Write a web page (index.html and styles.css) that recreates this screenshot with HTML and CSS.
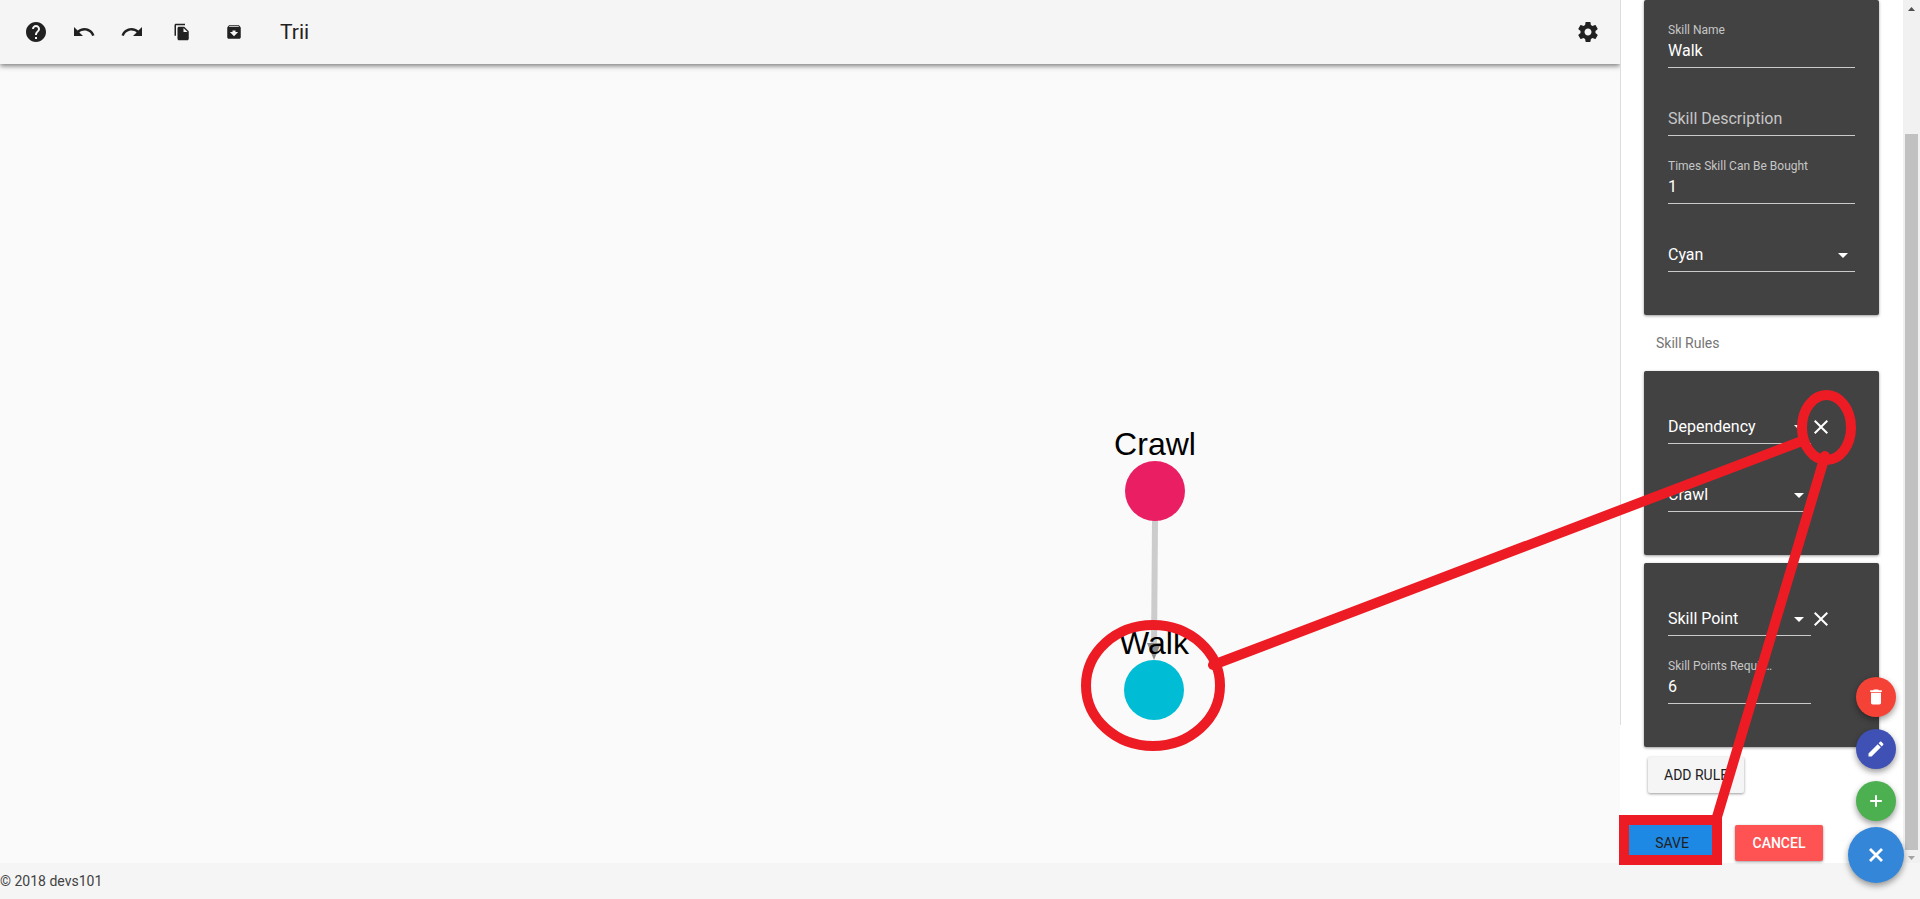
FILE: index.html
```html
<!DOCTYPE html>
<html lang="en">
<head>
<meta charset="utf-8">
<title>Trii</title>
<link rel="stylesheet" href="styles.css">
</head>
<body>
<div class="app">
  <div class="main">
    <div class="workspace">
      <header class="toolbar">
        <button class="tool" aria-label="Help"><svg class="icon" viewBox="0 0 24 24"><path d="M12 2C6.480 2 2 6.480 2 12s4.480 10 10 10 10-4.480 10-10S17.520 2 12 2zm1 17h-2v-2h2v2zm2.070-7.750l-.9.920C13.450 12.900 13 13.500 13 15h-2v-.5c0-1.100.45-2.100 1.170-2.830l1.240-1.260c.37-.36.59-.86.59-1.410 0-1.100-.9-2-2-2s-2 .9-2 2H8c0-2.210 1.790-4 4-4s4 1.790 4 4c0 .88-.36 1.680-.93 2.250z"/></svg></button>
        <button class="tool" aria-label="Undo"><svg class="icon" viewBox="0 0 24 24"><path d="M12.500 8c-2.650 0-5.050.99-6.900 2.600L2 7v9h9l-3.620-3.620c1.390-1.160 3.160-1.880 5.120-1.880 3.540 0 6.550 2.310 7.600 5.500l2.370-.78C21.080 11.030 17.150 8 12.500 8z"/></svg></button>
        <button class="tool" aria-label="Redo"><svg class="icon" viewBox="0 0 24 24"><path d="M18.400 10.600C16.550 8.990 14.150 8 11.500 8c-4.650 0-8.580 3.030-9.960 7.220L3.900 16c1.050-3.190 4.050-5.500 7.600-5.500 1.950 0 3.730.72 5.120 1.880L13 16h9V7l-3.600 3.600z"/></svg></button>
        <button class="tool tool-small" aria-label="Copy"><svg class="icon" viewBox="0 0 24 24"><path d="M16 1H4c-1.100 0-2 .9-2 2v14h2V3h12V1zm-1 4l6 6v10c0 1.100-.9 2-2 2H7.990C6.890 23 6 22.100 6 21l.01-14c0-1.100.89-2 1.990-2h7zm-1 7h5.500L14 6.500V12z"/></svg></button>
        <button class="tool tool-small" aria-label="Archive"><svg class="icon" viewBox="0 0 24 24"><path d="M20.540 5.230l-1.390-1.680C18.880 3.210 18.470 3 18 3H6c-.47 0-.88.21-1.160.55L3.460 5.230C3.170 5.570 3 6.020 3 6.500V19c0 1.100.9 2 2 2h14c1.100 0 2-.9 2-2V6.500c0-.48-.17-.93-.46-1.270zM12 17.500L6.500 12H10v-2h4v2h3.500L12 17.500zM5.120 5l.81-1h12l.94 1H5.120z"/></svg></button>
        <h1 class="title">Trii</h1>
        <button class="tool tool-end" aria-label="Settings"><svg class="icon" viewBox="0 0 24 24"><path d="M19.430 12.980c.04-.32.07-.64.07-.98s-.03-.66-.07-.98l2.110-1.650c.19-.15.24-.42.12-.64l-2-3.460c-.12-.22-.39-.3-.61-.22l-2.490 1c-.52-.4-1.080-.73-1.690-.98l-.38-2.650C14.460 2.180 14.250 2 14 2h-4c-.25 0-.46.18-.49.42l-.38 2.650c-.61.25-1.170.59-1.690.98l-2.490-1c-.23-.09-.49 0-.61.22l-2 3.460c-.13.22-.07.49.12.64l2.110 1.650c-.04.32-.07.65-.07.98s.03.66.07.98l-2.110 1.650c-.19.15-.24.42-.12.64l2 3.460c.12.22.39.3.61.22l2.490-1c.52.4 1.080.73 1.690.98l.38 2.650c.03.24.24.42.49.42h4c.25 0 .46-.18.49-.42l.38-2.650c.61-.25 1.170-.59 1.690-.98l2.490 1c.23.09.49 0 .61-.22l2-3.460c.12-.22.07-.49-.12-.64l-2.110-1.650zM12 15.500c-1.930 0-3.500-1.570-3.500-3.500s1.570-3.500 3.500-3.500 3.500 1.570 3.500 3.500-1.570 3.500-3.500 3.500z"/></svg></button>
      </header>
      <main class="canvas">
        <svg class="graph" width="600" height="799" viewBox="1020 64 600 799" aria-label="Skill tree">
          <line x1="1155" y1="520" x2="1154" y2="652" class="edge"/>
          <path d="M1147 643h14l-7 17z" class="arrowhead"/>
          <circle cx="1155" cy="491" r="30" class="node-pink"/>
          <circle cx="1154" cy="690" r="30" class="node-cyan"/>
          <text x="1155" y="455" class="node-label">Crawl</text>
          <text x="1154" y="654" class="node-label">Walk</text>
        </svg>
      </main>
    </div>
    <aside class="panel">
      <form class="panel-content">
        <section class="card card-top">
          <div class="field"><label for="name">Skill Name</label><input id="name" type="text" value="Walk"></div>
          <div class="field"><input type="text" aria-label="Skill Description" placeholder="Skill Description"></div>
          <div class="field"><label for="times">Times Skill Can Be Bought</label><input id="times" type="text" value="1"></div>
          <div class="field select"><select aria-label="Color"><option>Cyan</option></select></div>
        </section>
        <h2 class="subheader">Skill Rules</h2>
        <section class="card rule">
          <div class="rule-fields">
            <div class="field select"><select aria-label="Rule type"><option>Dependency</option></select></div>
            <div class="field select"><select aria-label="Required skill"><option>Crawl</option></select></div>
          </div>
          <button type="button" class="remove" aria-label="Remove rule"><svg class="icon" viewBox="5 5 14 14"><path d="M19 6.410L17.590 5 12 10.590 6.410 5 5 6.410 10.590 12 5 17.590 6.410 19 12 13.410 17.590 19 19 17.590 13.410 12z"/></svg></button>
        </section>
        <section class="card rule">
          <div class="rule-fields">
            <div class="field select"><select aria-label="Rule type"><option>Skill Point</option></select></div>
            <div class="field"><label for="points" class="clipped">Skill Points Required</label><input id="points" type="text" value="6"></div>
          </div>
          <button type="button" class="remove" aria-label="Remove rule"><svg class="icon" viewBox="5 5 14 14"><path d="M19 6.410L17.590 5 12 10.590 6.410 5 5 6.410 10.590 12 5 17.590 6.410 19 12 13.410 17.590 19 19 17.590 13.410 12z"/></svg></button>
        </section>
        <button type="button" class="btn btn-add">ADD RULE</button>
        <div class="actions">
          <button type="button" class="btn btn-save">SAVE</button>
          <button type="button" class="btn btn-cancel">CANCEL</button>
        </div>
      </form>
      <div class="scrollbar">
        <svg class="scroll-arrow" viewBox="0 0 17 17"><path d="M5 11h7l-3.500-4z" fill="#505050"/></svg>
        <div class="thumb"></div>
        <svg class="scroll-arrow scroll-down" viewBox="0 0 17 13"><path d="M5 6h7l-3.500 4z" fill="#a3a3a3"/></svg>
      </div>
    </aside>
  </div>
  <footer class="footer">© 2018 devs101</footer>
  <nav class="fabs">
    <button class="fab fab-red" aria-label="Delete"><svg class="icon" viewBox="0 0 24 24"><path d="M6 19c0 1.100.9 2 2 2h8c1.100 0 2-.9 2-2V7H6v12zM19 4h-3.500l-1-1h-5l-1 1H5v2h14V4z"/></svg></button>
    <button class="fab fab-indigo" aria-label="Edit"><svg class="icon" viewBox="0 0 24 24"><path d="M3 17.250V21h3.750L17.810 9.940l-3.750-3.750L3 17.250zM20.710 7.040c.39-.39.39-1.020 0-1.410l-2.340-2.340c-.39-.39-1.020-.39-1.410 0l-1.830 1.830 3.750 3.750 1.830-1.830z"/></svg></button>
    <button class="fab fab-green" aria-label="Add"><svg class="icon" viewBox="0 0 24 24"><path d="M19 13.200h-5.800V19h-2.400v-5.800H5v-2.400h5.800V5h2.400v5.800H19z"/></svg></button>
    <button class="fab fab-main" aria-label="Close"><svg class="icon" viewBox="0 0 24 24"><path d="M6 6l12 12M18 6L6 18" stroke="currentColor" stroke-width="2.800"/></svg></button>
  </nav>
  <svg class="markup" width="860" height="899" viewBox="1060 0 860 899" aria-hidden="true">
    <ellipse cx="1153" cy="685.500" rx="67" ry="60.500"/>
    <ellipse cx="1826.500" cy="427.500" rx="24.500" ry="32.500"/>
    <path d="M1213 665L1802 441M1825 456L1717 817" stroke-linecap="round"/>
    <path d="M1624 820h93v40h-93z"/>
  </svg>
</div>
</body>
</html>
```

FILE: styles.css
```css
* { box-sizing: border-box; }
body {
  margin: 0;
  font-family: Roboto, "Liberation Sans", sans-serif;
  color: #212121;
  background: #fafafa;
}
button { padding: 0; border: 0; background: none; color: inherit; font: inherit; }
.icon { display: block; width: 100%; height: 100%; fill: currentColor; }
.app { position: relative; display: flex; flex-direction: column; height: 100vh; overflow: hidden; }
.main { display: flex; flex: 1; min-height: 0; }
.workspace { display: flex; flex: 1; flex-direction: column; min-width: 0; overflow: hidden; }

.toolbar {
  display: flex;
  flex: none;
  align-items: center;
  gap: 24px;
  height: 64px;
  padding: 0 20px 0 24px;
  background: #f5f5f5;
  box-shadow: 0 2px 5px rgba(0, 0, 0, .5);
}
.tool { width: 24px; height: 24px; }
.tool-small { width: 18px; height: 18px; margin: 0 5px; }
.tool-end { margin-left: auto; }
.title { margin: 0 0 0 8px; font-size: 21px; font-weight: 400; line-height: 24px; }

.canvas { display: flex; flex: 1; justify-content: flex-end; align-items: flex-start; min-height: 0; }
.graph { flex: none; }
.edge { stroke: #ccc; stroke-width: 6; }
.arrowhead { fill: #8c8c8c; }
.node-pink { fill: #e91e63; }
.node-cyan { fill: #00bcd4; }
.node-label { font: 32px "Liberation Sans", Arial, sans-serif; text-anchor: middle; fill: #000; }

.panel {
  position: relative;
  display: flex;
  flex: none;
  width: 300px;
  background: #fff;
}
.panel::before {
  content: "";
  position: absolute;
  top: 0;
  left: 0;
  width: 1px;
  height: 84%;
  background: #ddd;
}
.panel-content { flex: 1; min-width: 0; }
.card {
  margin: 0 24px 8px;
  padding: 5px 24px 43px;
  border-radius: 2px;
  background: #424242;
  color: #fff;
  box-shadow: 0 1px 3px rgba(0, 0, 0, .4);
}
.card-top { margin-bottom: 0; padding-top: 0; }
.field {
  display: flex;
  flex-direction: column;
  justify-content: flex-end;
  height: 68px;
  padding-bottom: 4px;
  border-bottom: 1px solid #cacaca;
}
.field label { font-size: 12px; line-height: 14px; color: #c6c6c6; }
.field .clipped { width: 108px; overflow: hidden; text-overflow: ellipsis; white-space: nowrap; }
.field input, .field select {
  width: 100%;
  height: 26px;
  padding: 0;
  border: 0;
  outline: 0;
  background: none;
  color: #fff;
  font: 400 16px/24px Roboto, "Liberation Sans", sans-serif;
  appearance: none;
}
.field input::placeholder { color: #c6c6c6; opacity: 1; }
.select { position: relative; padding-bottom: 3px; }
.select::after {
  content: "";
  position: absolute;
  right: 7px;
  bottom: 13px;
  border: 5px solid transparent;
  border-top-color: #fff;
  border-bottom: 0;
}
.rule { display: flex; align-items: flex-start; gap: 3px; }
.rule-fields { flex: none; width: 143px; }
.remove { flex: none; width: 14px; height: 14px; margin-top: 44px; }
.subheader {
  margin: 0;
  padding: 16px 36px;
  color: #757575;
  font-size: 14px;
  font-weight: 400;
  line-height: 24px;
}
.btn {
  height: 36px;
  min-width: 88px;
  padding: 0 16px;
  border-radius: 2px;
  font-size: 14px;
  font-weight: 500;
  line-height: 36px;
  box-shadow: 0 1px 3px rgba(0, 0, 0, .4);
}
.btn-add { display: block; min-width: 96px; margin: 10px 0 0 28px; background: #f5f5f5; font-weight: 400; }
.actions { display: flex; gap: 19px; margin: 32px 0 0 8px; }
.btn-save { background: #1e88e5; font-weight: 400; }
.btn-cancel { background: #ff5252; color: #fff; }

.scrollbar { display: flex; flex: none; flex-direction: column; width: 17px; background: #f1f1f1; }
.scroll-arrow { flex: none; width: 17px; height: 17px; }
.scroll-down { height: 13px; }
.thumb { flex: 1; margin: 117px 2px 0; background: #c1c1c1; }

.footer { flex: none; height: 36px; background: #f5f5f5; color: #424242; font-size: 14px; line-height: 36px; }

.fabs {
  position: absolute;
  right: 16px;
  bottom: 16px;
  display: flex;
  flex-direction: column;
  align-items: center;
  gap: 12px;
}
.fab {
  display: grid;
  place-items: center;
  width: 40px;
  height: 40px;
  border-radius: 50%;
  color: #fff;
  box-shadow: 0 3px 6px rgba(0, 0, 0, .4);
}
.fab .icon { width: 20px; height: 20px; }
.fab-red { background: #f44336; }
.fab-indigo { background: #3f51b5; }
.fab-green { background: #4caf50; }
.fab-main { width: 56px; height: 56px; margin-top: -6px; background: #3486d8; }
.fab-main .icon { width: 24px; height: 24px; }

.markup { position: absolute; top: 0; right: 0; pointer-events: none; fill: none; stroke: #ed1c24; stroke-width: 10; }
```
